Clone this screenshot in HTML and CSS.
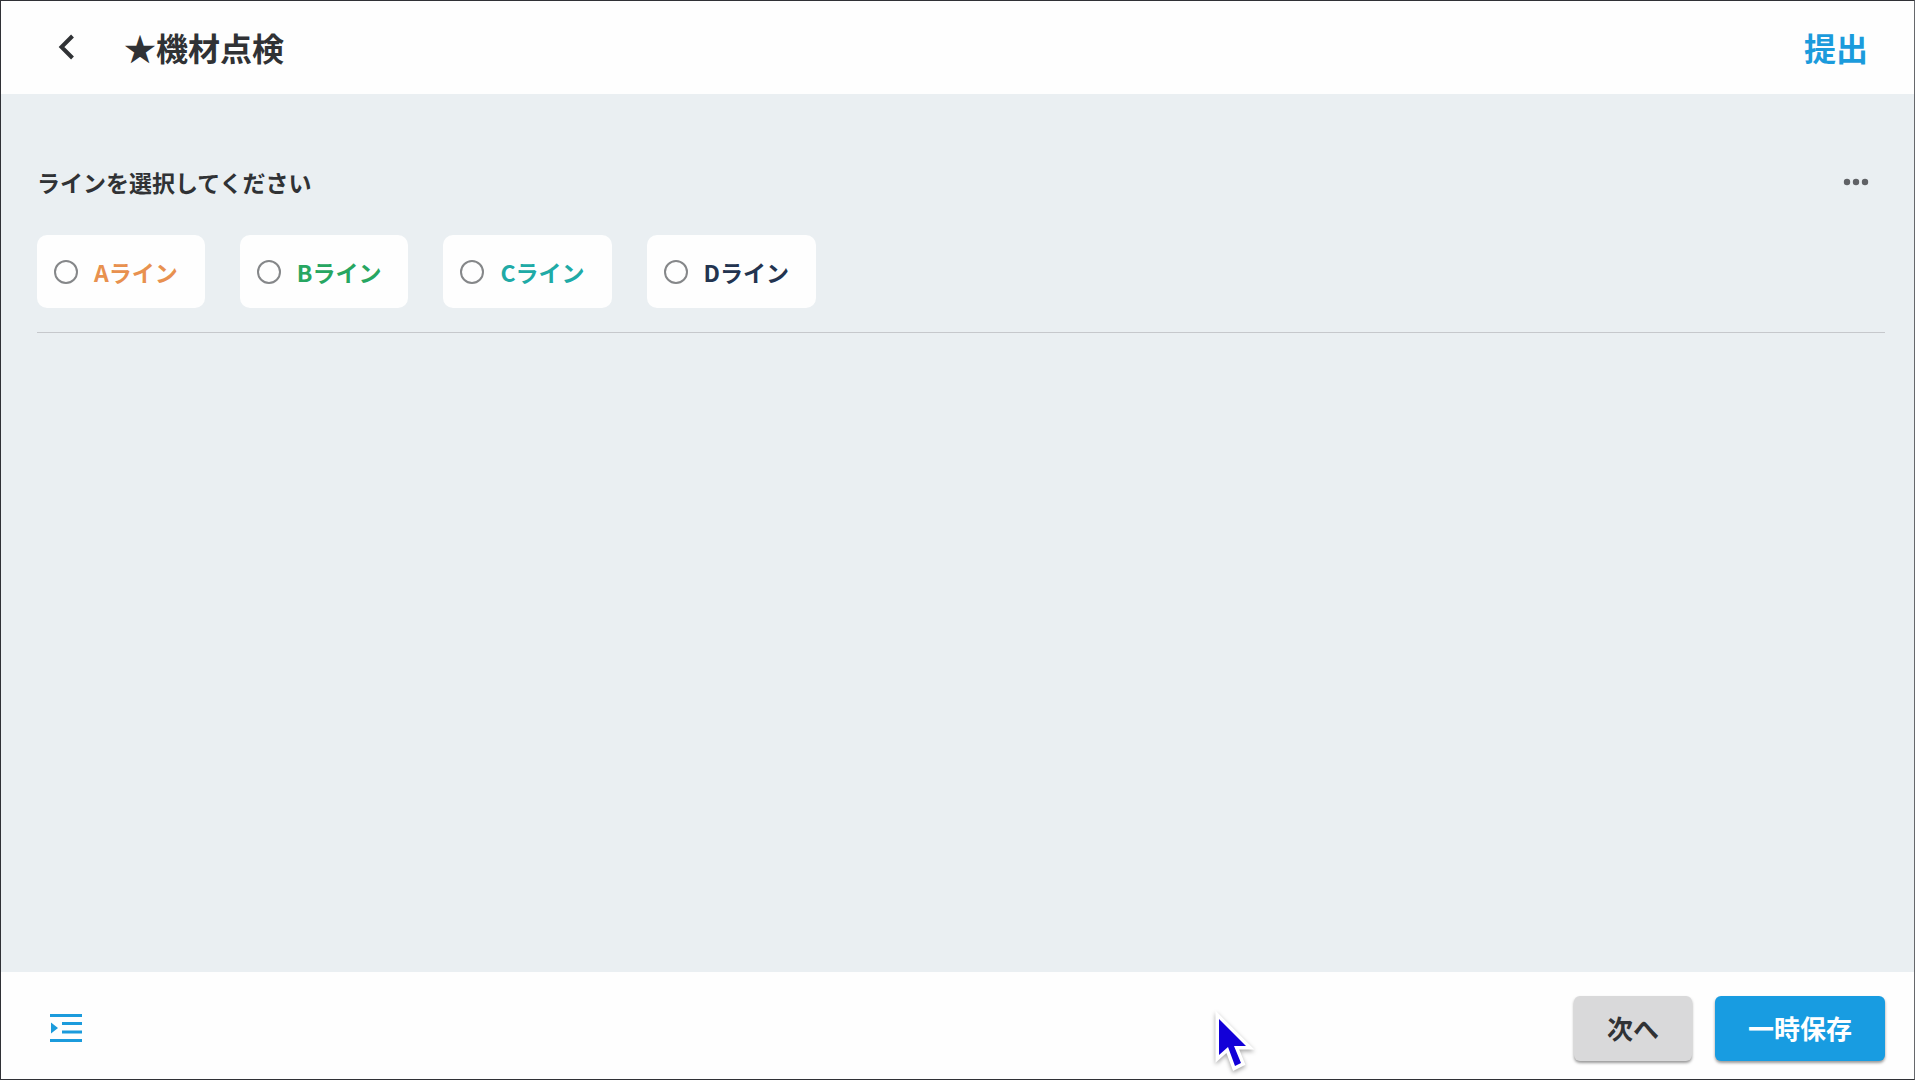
FILE: index.html
```html
<!DOCTYPE html>
<html lang="ja">
<head>
<meta charset="utf-8">
<meta name="viewport" content="width=device-width, initial-scale=1">
<title>★機材点検</title>
<link rel="stylesheet" href="styles.css">
</head>
<body>
<div class="app">
  <header class="header">
    <button class="icon-button" type="button" aria-label="戻る">
      <svg width="18" height="26" viewBox="0 0 18 26"><path d="M15.5 2 4.500 13l11 11" fill="none" stroke="currentColor" stroke-width="4"/></svg>
    </button>
    <h1 class="title">★機材点検</h1>
    <button class="submit" type="button">提出</button>
  </header>

  <main class="content">
    <fieldset class="question" aria-labelledby="q1">
      <div class="question-head">
        <h2 class="question-title" id="q1">ラインを選択してください</h2>
        <button class="icon-button more" type="button" aria-label="メニュー">
          <svg width="26" height="8" viewBox="0 0 26 8" fill="currentColor"><circle cx="4" cy="4" r="3.200"/><circle cx="13" cy="4" r="3.200"/><circle cx="22" cy="4" r="3.200"/></svg>
        </button>
      </div>
      <div class="options">
        <label class="option option-a"><input class="radio" type="radio" name="line" value="a">Aライン</label>
        <label class="option option-b"><input class="radio" type="radio" name="line" value="b">Bライン</label>
        <label class="option option-c"><input class="radio" type="radio" name="line" value="c">Cライン</label>
        <label class="option option-d"><input class="radio" type="radio" name="line" value="d">Dライン</label>
      </div>
    </fieldset>
  </main>

  <footer class="footer">
    <button class="icon-button outline" type="button" aria-label="目次">
      <svg width="32" height="28" viewBox="0 0 32 28" fill="currentColor"><path d="M0 0h32v3H0zM12 8h20v3H12zM12 16.500h20v3H12zM0 25h32v3H0zM1 8.500l7 5.500-7 5.500z"/></svg>
    </button>
    <button class="button button-next" type="button">次へ</button>
    <button class="button button-save" type="button">一時保存</button>
  </footer>

  <svg class="pointer" width="44" height="62" viewBox="0 0 44 62" aria-hidden="true"><path d="M8 8v36l9-8 7 19 6-3-7-17h12z" fill="#1200d8" stroke="#fff" stroke-width="7" paint-order="stroke"/></svg>
</div>
</body>
</html>
```
FILE: styles.css
```css
* {
  box-sizing: border-box;
}

body {
  margin: 0;
  padding-right: 5px;
  background: #fff;
  color: #303235;
  font-family: "Noto Sans CJK JP", sans-serif;
  font-weight: 700;
}

button {
  margin: 0;
  padding: 0;
  border: 0;
  background: none;
  color: inherit;
  font: inherit;
  cursor: pointer;
}

.app {
  position: relative;
  display: flex;
  flex-direction: column;
  min-height: 100vh;
  border: 1px solid #303136;
  border-right-color: #66686c;
}

.header {
  display: flex;
  align-items: center;
  height: 93px;
  padding: 0 46px 2px 56px;
  background: #fefefe;
}

.icon-button {
  display: flex;
  align-items: center;
  justify-content: center;
}

.title {
  margin: 0 auto 0 49px;
  font-size: 32px;
  line-height: 48px;
}

.submit {
  color: #1b9bdc;
  font-size: 32px;
  line-height: 48px;
}

.content {
  flex: 1;
  padding: 68px 29px 0 36px;
  background: #eaeff2;
}

.question {
  min-width: 0;
  margin: 0;
  padding: 0 0 24px;
  border: 0;
  border-bottom: 1px solid #c6c8cc;
}

.question-head {
  display: flex;
  align-items: center;
  justify-content: space-between;
  margin-bottom: 33px;
  padding-right: 16px;
}

.question-title {
  margin: 0;
  font-size: 23px;
  line-height: 40px;
}

.more {
  color: #606266;
}

.options {
  display: flex;
  flex-wrap: wrap;
  gap: 35px;
}

.option {
  display: flex;
  align-items: center;
  gap: 16px;
  height: 73px;
  padding: 0 27px 0 17px;
  border-radius: 10px;
  background: #fefefe;
  font-size: 23px;
  line-height: 36px;
}

.option-a { color: #e8914f; }
.option-b { color: #27a661; }
.option-c { color: #20aaa6; }
.option-d { color: #233450; }

.radio {
  appearance: none;
  width: 24px;
  height: 24px;
  margin: 0;
  border: 2px solid #858789;
  border-radius: 50%;
}

.radio:checked {
  border-width: 8px;
  border-color: #189bdf;
}

.footer {
  display: flex;
  align-items: center;
  gap: 23px;
  height: 107px;
  padding: 5px 29px 0 49px;
  background: #fefefe;
}

.outline {
  margin-right: auto;
  color: #1b9bdc;
}

.button {
  height: 65px;
  padding: 0 33px;
  border-radius: 6px;
  font-size: 26px;
  line-height: 40px;
  box-shadow: 0 2px 3px rgba(0, 0, 0, 0.4);
}

.button-next {
  background: #d9d9da;
}

.button-save {
  background: #189ce1;
  color: #fff;
}

.pointer {
  position: absolute;
  left: 1210px;
  bottom: 6px;
  filter: drop-shadow(0 2px 2px rgba(0, 0, 0, 0.35));
}
```
